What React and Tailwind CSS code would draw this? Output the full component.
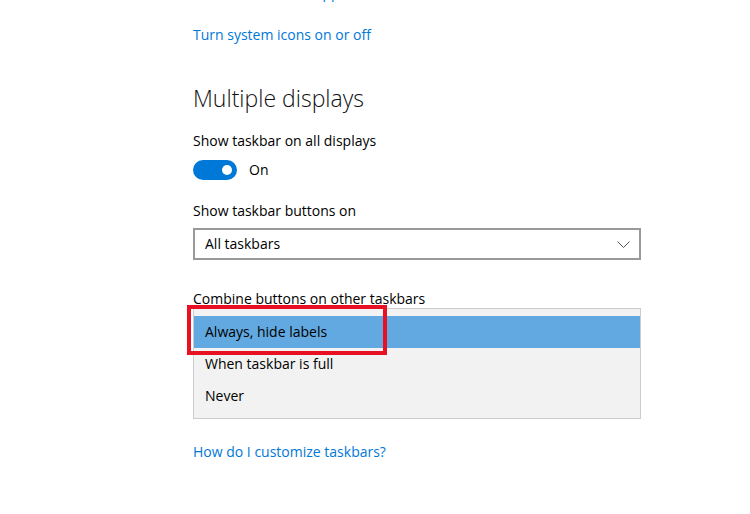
const Toggle = () => (
  <div className="flex items-center gap-3 h-5">
    <div className="w-[44px] h-[20px] rounded-full bg-[#0078d7] flex items-center justify-end pr-[5px]">
      <div className="w-[10px] h-[10px] rounded-full bg-white" />
    </div>
    <span className="leading-5">On</span>
  </div>
);

export default function App() {
  const font = { fontFamily: '"Open Sans", "Liberation Sans", sans-serif' };
  return (
    <div className="w-[750px] h-[514px] bg-white overflow-hidden pl-[193px] pt-[3px] text-black" style={font}>
      <div className="relative w-[448px] text-[14px] leading-5">
        {/* link cut off at the top */}
        <div className="-mt-[20px] h-5 text-[#0078d7]">Select which icons appear on the taskbar</div>
        <div className="mt-[22px] h-5 text-[#0078d7]">Turn system icons on or off</div>

        <h2 className="mt-[35px] text-[23px] leading-9 font-light text-[#111]">Multiple displays</h2>

        <div className="mt-[15px] h-5">Show taskbar on all displays</div>
        <div className="mt-[9px]">
          <Toggle />
        </div>

        <div className="mt-[21px] h-5">Show taskbar buttons on</div>
        <div className="mt-[7px] h-[32px] border-2 border-[#999999] flex items-center justify-between pl-[10px] pr-[9px]">
          <span>All taskbars</span>
          <svg width="13" height="7" viewBox="0 0 13 7" fill="none">
            <path d="M0.5 0.5 L6.5 6.5 L12.5 0.5" stroke="#555" strokeWidth="1" />
          </svg>
        </div>

        <div className="mt-[29px] h-5">Combine buttons on other taskbars</div>
        <div className="-mt-[1px] border border-[#cccccc] bg-[#f2f2f2] pt-[7px] pb-[6px]">
          <div className="h-[32px] bg-[#62a8e1] flex items-center pl-[11px]">Always, hide labels</div>
          <div className="h-[32px] flex items-center pl-[11px]">When taskbar is full</div>
          <div className="h-[32px] flex items-center pl-[11px]">Never</div>
        </div>

        <div className="mt-[23px] h-5 text-[#0078d7]">How do I customize taskbars?</div>

        <div className="absolute left-[-6px] top-[322px] w-[200px] h-[50px] border-4 border-[#e81123]" />
      </div>
    </div>
  );
}
